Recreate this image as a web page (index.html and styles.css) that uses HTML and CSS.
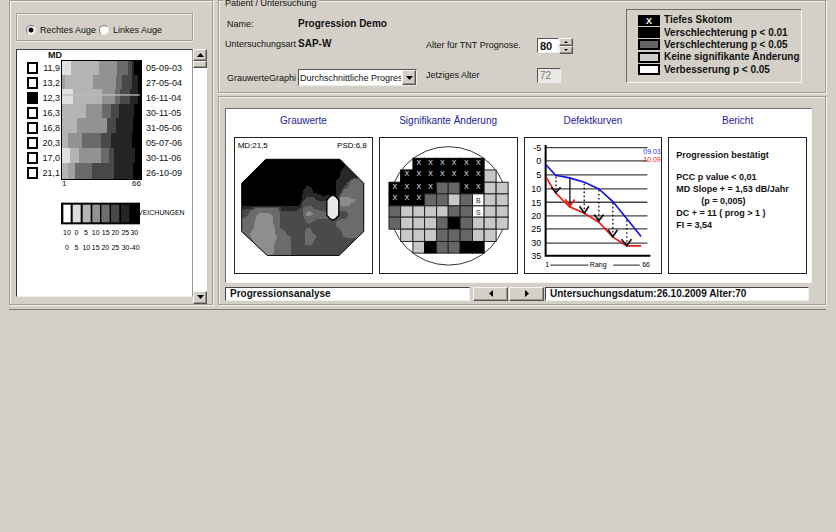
FILE: index.html
```html
<!DOCTYPE html>
<html lang="de">
<head>
<meta charset="utf-8">
<title>Progressionsanalyse</title>
<link rel="stylesheet" href="styles.css">
</head>
<body>
<main class="app">
  <section class="etched side">
    <div class="etched eyes">
      <label class="radio"><input type="radio" name="eye" checked>Rechtes Auge</label>
      <label class="radio"><input type="radio" name="eye">Linkes Auge</label>
    </div>
    <div class="browser">
      <div class="sunken list">
        <div class="md-head">MD</div>
        <div class="exams">
          <svg class="heat" id="heat" viewBox="182 178 243 360" aria-hidden="true"></svg>
          <input type="checkbox" id="e1"><label class="md" for="e1">11,9</label><span class="date">05-09-03</span>
          <input type="checkbox" id="e2"><label class="md" for="e2">13,2</label><span class="date">27-05-04</span>
          <input type="checkbox" id="e3" checked><label class="md" for="e3">12,3</label><span class="date">16-11-04</span>
          <input type="checkbox" id="e4"><label class="md" for="e4">16,3</label><span class="date">30-11-05</span>
          <input type="checkbox" id="e5"><label class="md" for="e5">16,8</label><span class="date">31-05-06</span>
          <input type="checkbox" id="e6"><label class="md" for="e6">20,3</label><span class="date">05-07-06</span>
          <input type="checkbox" id="e7"><label class="md" for="e7">17,0</label><span class="date">30-11-06</span>
          <input type="checkbox" id="e8"><label class="md" for="e8">21,1</label><span class="date">26-10-09</span>
        </div>
        <div class="ranks"><span>1</span><span>66</span></div>
        <svg class="scale" viewBox="182 65 372 153">
          <g class="t7"><text x="413" y="105">VEICHUNGEN</text></g>
          <rect x="182" y="67" width="237" height="65" fill="#000"/>
          <rect x="189" y="73" width="22" height="53" fill="#fff"/>
          <rect x="217" y="73" width="24" height="53" fill="#dcdcdc"/>
          <rect x="247" y="73" width="24" height="53" fill="#b4b4b4"/>
          <rect x="276" y="73" width="23" height="53" fill="#929292"/>
          <rect x="303" y="73" width="25" height="53" fill="#6e6e6e"/>
          <rect x="332" y="73" width="25" height="53" fill="#484848"/>
          <rect x="362" y="73" width="25" height="53" fill="#242424"/>
          <g class="t7 mid">
            <text x="200" y="165">10</text><text x="228" y="165">0</text><text x="257" y="165">5</text><text x="286" y="165">10</text><text x="316" y="165">15</text><text x="345" y="165">20</text><text x="375" y="165">25</text><text x="402" y="165">30</text>
            <text x="200" y="210">0</text><text x="228" y="210">5</text><text x="258" y="210">10</text><text x="286" y="210">15</text><text x="315" y="210">20</text><text x="345" y="210">25</text><text x="391" y="210">30-40</text>
          </g>
        </svg>
      </div>
      <div class="scroll">
        <button class="raised" aria-label="Nach oben"><svg viewBox="0 0 7 4"><path d="M3.500 0 7 4H0z"/></svg></button>
        <div class="raised thumb"></div>
        <button class="raised down" aria-label="Nach unten"><svg viewBox="0 0 7 4"><path d="M0 0h7L3.500 4z"/></svg></button>
      </div>
    </div>
  </section>

  <div class="main">
    <section class="etched patient">
      <h2 class="caption">Patient / Untersuchung</h2>
      <dl class="info">
        <dt>Name:</dt><dd>Progression Demo</dd>
        <dt class="wide">Untersuchungsart</dt><dd>SAP-W</dd>
        <dt class="low"><label for="graph">GrauwerteGraphi</label></dt>
        <dd class="low"><span class="combo"><select id="graph"><option>Durchschnittliche Progress</option></select><i class="raised"><svg viewBox="0 0 7 4"><path d="M0 0h7L3.500 4z"/></svg></i></span></dd>
      </dl>
      <div class="ages">
        <label for="prog">Alter für TNT Prognose.</label>
        <span class="spin"><input class="sunken strong" id="prog" type="text" value="80"><span class="steps"><button class="raised" aria-label="Mehr"><svg viewBox="0 0 4 2"><path d="M2 0 4 2H0z"/></svg></button><button class="raised" aria-label="Weniger"><svg viewBox="0 0 4 2"><path d="M0 0h4L2 2z"/></svg></button></span></span>
        <label for="age">Jetziges Alter</label>
        <input class="sunken dim" id="age" type="text" value="72" disabled>
      </div>
      <ul class="sunken key">
        <li><i class="deep">X</i>Tiefes Skotom</li>
        <li><i class="p01"></i>Verschlechterung p &lt; 0.01</li>
        <li><i class="p05"></i>Verschlechterung p &lt; 0.05</li>
        <li><i class="same"></i>Keine signifikante Änderung</li>
        <li><i class="better"></i>Verbesserung p &lt; 0.05</li>
      </ul>
    </section>

    <section class="etched results">
      <div class="sunken charts">
        <figure>
          <figcaption>Grauwerte</figcaption>
          <div class="card"><svg viewBox="45 114 411 405">
            <defs><clipPath id="oct"><path d="M138 178H360L432 250V395L358 467H142L65 395V250z"/></clipPath></defs>
            <g class="t8"><text x="53" y="145">MD:21,5</text><text x="441" y="145" text-anchor="end">PSD:6,8</text></g>
            <g clip-path="url(#oct)" shape-rendering="crispEdges">
              <path fill="#4a4a4a" d="M65 178h367v289H65z"/>
              <path fill="#282828" d="M65 300H240V270L262 254 300 275 350 270 350 178H432V235H400L385 245 372 260 360 285 350 300 320 304H296L280 292 262 290 250 304 242 325 230 332H182V322H100V326L65 330z"/>
              <path fill="#000" d="M65 178H376V198L364 210 358 235 350 240V286H320L308 290 303 284 280 278 276 265 262 257 250 272 245 300 238 318H65z"/>
              <path fill="#6b6b6b" d="M432 237H402L390 245 385 262 373 268 362 286 358 333H378L386 342 380 356 362 358 350 366V380L362 390 370 410 385 415H432z"/>
              <path fill="#8b8b8b" d="M362 291H390L394 298H406V306L394 310 390 318H362z"/>
              <path fill="#6b6b6b" d="M65 356 82 350 92 332 108 324H172L180 340V382L194 394 202 404 212 410V467H60z"/>
              <path fill="#8e8e8e" d="M110 348 118 340H150L158 350V368L166 384V400L172 412 164 430 160 467H130L104 430 92 412 90 400 102 386 104 366z"/>
              <path fill="#656565" d="M250 325 260 318H275L284 328 300 332H324V358H288L280 366 265 372 256 362 250 345z"/>
              <path fill="#8b8b8b" d="M257 336H265V332H272V339H278V345H270V348H257z"/>
              <path fill="#6b6b6b" d="M255 394 260 383H272L277 398 284 402 290 411 284 420 278 434 262 438 254 433z"/>
            </g>
            <path fill="none" stroke="#000" stroke-width="3" d="M138 178H360L432 250V395L358 467H142L65 395V250z"/>
            <path fill="#e8e8e8" stroke="#000" stroke-width="4" d="M321 301 330 290 339 286 348 290 357 301V346L348 356 339 361 330 356 321 346z"/>
          </svg></div>
        </figure>
        <figure>
          <figcaption>Signifikante Änderung</figcaption>
          <div class="card"><svg id="signif" viewBox="10 114 411 405">
            <circle cx="216" cy="318" r="178" fill="#fff" stroke="#333" stroke-width="3"/>
          </svg></div>
        </figure>
        <figure>
          <figcaption>Defektkurven</figcaption>
          <div class="card"><svg viewBox="16 114 411 405">
            <path stroke="#444" stroke-width="4" fill="none" d="M80 143H384M80 183H384M80 225H384M80 267H384M80 307H384M80 348H384M80 387H384M80 430H384"/>
            <path stroke="#000" stroke-width="6" fill="none" d="M78 135V468H393"/>
            <g class="t9" text-anchor="end"><text x="65" y="153">-5</text><text x="65" y="193">0</text><text x="65" y="235">5</text><text x="65" y="277">10</text><text x="65" y="317">15</text><text x="65" y="358">20</text><text x="65" y="397">25</text><text x="65" y="440">30</text><text x="65" y="478">35</text></g>
            <g class="t7" text-anchor="end"><text x="424" y="163" fill="#2a3cdc">09.03</text><text x="424" y="187" fill="#f02020">10.09</text></g>
            <path stroke="#1414dc" stroke-width="5" fill="none" d="M80 195 108 226 150 234 195 247 238 267 280 305 322 357 365 410"/>
            <path stroke="#f01818" stroke-width="5" fill="none" d="M80 233 108 279 150 321 195 340 238 367 280 412 322 438H365"/>
            <path stroke="#111" stroke-width="4" stroke-dasharray="5 7" fill="none" d="M109 230V275M194 251V336M238 270V362M280 309V408M322 361V434"/>
            <path stroke="#111" stroke-width="4" fill="none" d="M151 236V318"/>
            <path stroke="#111" stroke-width="5" fill="none" d="M95 262 109 278 123 262M180 319 194 340 208 319M224 344 238 363 252 344M266 390 280 411 294 390M306 418 322 438 336 418"/>
            <path stroke="#f01818" stroke-width="5" fill="none" d="M137 298 151 319 165 299"/>
            <path stroke="#222" stroke-width="3" d="M92 496H207M281 496H361"/>
            <g class="t7 mid"><text x="83" y="503">1</text><text x="236" y="503">Rang</text><text x="380" y="503">66</text></g>
          </svg></div>
        </figure>
        <figure>
          <figcaption>Bericht</figcaption>
          <div class="card report">
            <p class="verdict">Progression bestätigt</p>
            <p>PCC p value &lt; 0,01</p>
            <p>MD Slope + = 1,53 dB/Jahr</p>
            <p class="indent">(p = 0,005)</p>
            <p>DC + = 11 ( prog &gt; 1 )</p>
            <p>FI = 3,54</p>
          </div>
        </figure>
      </div>
      <div class="status">
        <output class="sunken mode">Progressionsanalyse</output>
        <button class="raised" aria-label="Zurück"><svg viewBox="0 0 4 7"><path d="M4 0v7L0 3.500z"/></svg></button>
        <button class="raised" aria-label="Weiter"><svg viewBox="0 0 4 7"><path d="M0 0v7L4 3.500z"/></svg></button>
        <output class="sunken exam">Untersuchungsdatum:26.10.2009 Alter:70</output>
      </div>
    </section>
  </div>
</main>
<script src="charts.js"></script>
</body>
</html>
```
FILE: styles.css
```css
* { box-sizing: border-box; }
body {
  margin: 0;
  background: #d4d0c8;
  color: #111;
  font: 9px/12px "Liberation Sans", Arial, sans-serif;
}
button, input, select { font: inherit; color: inherit; margin: 0; padding: 0; border-radius: 0; }
h2, dl, dd, ul, p, figure { margin: 0; padding: 0; }
i { font-style: normal; }
svg { display: block; }

.etched { border: 1px solid #a19e97; box-shadow: inset 1px 1px #f3f1ec, 1px 1px #f3f1ec; }
.sunken { border: 1px solid; border-color: #6e6c68 #f6f5f2 #f6f5f2 #6e6c68; }
.raised {
  background: #d4d0c8;
  border: 1px solid;
  border-color: #f6f5f2 #55534f #55534f #f6f5f2;
  box-shadow: inset -1px -1px #98958f;
  display: flex;
  align-items: center;
  justify-content: center;
}

.app {
  display: grid;
  grid-template-columns: 204px 1fr;
  gap: 5px;
  margin: 0 10px 0 9px;
  padding-bottom: 4px;
  border-bottom: 1px solid #7e7c77;
  box-shadow: 0 1px #b3b0a9;
}

/* examination browser */
.side { padding: 12px 5px 0 6px; display: flex; flex-direction: column; }
.eyes { display: flex; height: 28px; width: 177px; align-items: center; gap: 3px; padding: 6px 0 0 9px; }
.radio { display: flex; align-items: center; gap: 4px; white-space: nowrap; }
.radio input {
  appearance: none;
  width: 10px;
  height: 10px;
  border-radius: 50%;
  border: 1px solid;
  border-color: #777 #f0eeea #f0eeea #777;
  background: #fff;
}
.radio input:checked { background: radial-gradient(#000 2px, #fff 3px); }
.browser { display: grid; grid-template-columns: 1fr 14px; flex: 1; margin-top: 8px; }
.list { background: #fff; border-color: #444 #999 #eee #333; padding: 0 0 0 10px; margin-bottom: 7px; }
.md-head { font-weight: bold; line-height: 10px; width: 35px; text-align: right; }
.exams {
  display: grid;
  grid-template-columns: 11px 23px 81px 1fr;
  grid-template-rows: repeat(8, 1fr);
  height: 120px;
  align-items: center;
}
.exams input {
  appearance: none;
  grid-column: 1;
  width: 11px;
  height: 12px;
  border: 2px solid #000;
  background: #fff;
}
.exams input:checked { background: #000; }
.md { grid-column: 2; text-align: right; padding-right: 1px; }
.heat { grid-column: 3; grid-row: 1 / 9; width: 81px; height: 120px; }
.date { grid-column: 4; padding-left: 4px; }
.ranks { display: flex; justify-content: space-between; width: 79px; margin-left: 35px; font-size: 8px; line-height: 8px; }
.scale { width: 124px; height: 51px; margin: 14px 0 0 34px; }
.scroll { background: #fff; display: flex; flex-direction: column; }
.scroll button { height: 12px; }
.scroll svg { width: 7px; height: 4px; }
.scroll .thumb { height: 7px; }
.scroll .down { margin-top: auto; height: 13px; }

.t7 { font-size: 21px; }
.t8 { font-size: 24px; }
.t9 { font-size: 27px; }
.mid { text-anchor: middle; }

/* patient data */
.main { display: flex; flex-direction: column; gap: 3px; min-width: 0; }
.patient {
  display: grid;
  grid-template-columns: 201px 200px 176px;
  height: 93px;
  padding-left: 6px;
  position: relative;
}
.caption {
  position: absolute;
  top: -4px;
  left: 4px;
  padding: 0 2px;
  background: #d4d0c8;
  font-size: 9px;
  font-weight: normal;
  line-height: 12px;
}
.info { display: grid; grid-template-columns: 73px 1fr; grid-template-rows: 20px 20px 32px; padding-top: 13px; align-items: center; }
dt { padding-left: 2px; white-space: nowrap; }
.info .wide { padding-left: 0; }
dd, .strong { font-weight: bold; font-size: 10px; }
.info .low { align-self: end; }
dt.low { padding-bottom: 2px; }
.combo { display: block; position: relative; width: 119px; }
.combo select {
  appearance: none;
  display: block;
  width: 100%;
  height: 17px;
  padding: 0 15px 0 1px;
  border: 1px solid;
  border-color: #555 #eee #eee #555;
  border-radius: 0;
  background: #fff;
  font-weight: normal;
  font-size: 9px;
  overflow: hidden;
}
.combo i { position: absolute; right: 1px; top: 1px; width: 14px; height: 15px; pointer-events: none; }
.combo svg { width: 7px; height: 4px; }
.ages {
  display: grid;
  grid-template-columns: 111px 1fr;
  grid-template-rows: 17px 15px;
  row-gap: 14px;
  padding-top: 36px;
  align-items: center;
}
.ages label { padding-bottom: 2px; }
.ages .sunken { width: 24px; height: 15px; padding: 0 0 0 2px; background: #fff; border-color: #555 #eee #eee #555; }
.ages .dim { color: #777; background: #eae8e4; font-size: 10px; }
.spin { display: flex; align-items: center; }
.spin .strong { width: 22px; font-size: 11px; }
.steps { display: grid; grid-template-rows: 8px 8px; width: 14px; }
.steps svg { width: 4px; height: 2px; }
.key {
  list-style: none;
  align-self: start;
  margin-top: 8px;
  height: 74px;
  padding: 4px 0 6px 11px;
  display: grid;
  grid-template-rows: repeat(5, 1fr);
  align-items: center;
  font-weight: bold;
  font-size: 10px;
  white-space: nowrap;
}
.key li { display: flex; align-items: center; gap: 4px; }
.key i { width: 22px; height: 11px; border: 2px solid #000; text-align: center; font-size: 9px; line-height: 8px; color: #fff; }
.deep, .p01 { background: #000; }
.p05 { background: #666; }
.same { background: #ccc; }
.better { background: #fff; }

/* results */
.results { padding: 11px 13px 3px 6px; }
.charts {
  display: grid;
  grid-template-columns: repeat(4, 1fr);
  gap: 6px;
  padding: 4px 4px 8px 8px;
  background: #fff;
}
figure { display: flex; flex-direction: column; min-width: 0; }
figcaption { text-align: center; font-size: 10px; line-height: 16px; margin-bottom: 8px; color: #1c1ca0; }
.card { border: 1px solid #222; flex: 1; }
.card svg { width: 100%; height: auto; }
.report { font-weight: bold; padding: 11px 0 0 7px; white-space: nowrap; }
.report p { line-height: 12px; }
.report .verdict { margin-bottom: 10px; }
.report .indent { padding-left: 25px; }
.status { display: grid; grid-template-columns: 247px 35px 35px 1fr; column-gap: 1px; margin: 4px 3px 0 0; height: 14px; font-weight: bold; font-size: 10px; }
.status output { background: #fff; padding-left: 4px; line-height: 12px; border-color: #444 #eee #eee #444; white-space: nowrap; overflow: hidden; }
.status .mode { margin-right: 2px; }
.status svg { width: 4px; height: 7px; }
```
FILE: charts.js
```js
const NS = 'http://www.w3.org/2000/svg';
function add(parent, name, attrs, text) {
  const el = document.createElementNS(NS, name);
  for (const k in attrs) el.setAttribute(k, attrs[k]);
  if (text) el.textContent = text;
  parent.appendChild(el);
}

// Sorted defects: one band per examination, each [right edge, grey level].
const bands = [
  [[213, '#e0e0e0'], [296, '#b4b4b4'], [349, '#929292'], [382, '#6a6a6a'], [395, '#484848'], [402, '#242424']],
  [[194, '#a0a0a0'], [278, '#b4b4b4'], [347, '#929292'], [365, '#6a6a6a'], [395, '#484848'], [412, '#242424']],
  [[217, '#e0e0e0'], [305, '#b4b4b4'], [343, '#929292'], [360, '#6a6a6a'], [390, '#484848'], [412, '#242424']],
  [[258, '#b4b4b4'], [305, '#929292'], [333, '#6a6a6a'], [355, '#484848'], [400, '#242424']],
  [[230, '#b4b4b4'], [320, '#929292'], [348, '#484848'], [398, '#242424']],
  [[202, '#b4b4b4'], [244, '#929292'], [303, '#6a6a6a'], [332, '#484848'], [395, '#242424']],
  [[210, '#e0e0e0'], [236, '#b4b4b4'], [303, '#929292'], [325, '#6a6a6a'], [341, '#484848'], [405, '#242424']],
  [[202, '#b4b4b4'], [224, '#a0a0a0'], [274, '#6a6a6a'], [341, '#484848'], [398, '#242424']]
];
const edges = [180, 222, 265, 309, 353, 398, 442, 486, 535];
const heat = document.getElementById('heat');
add(heat, 'rect', { x: 182, y: 178, width: 243, height: 360, fill: '#000' });
bands.forEach((band, r) => {
  let x = 186;
  band.forEach(([end, fill]) => {
    add(heat, 'rect', { x, y: edges[r], width: end - x, height: edges[r + 1] - edges[r], fill, 'shape-rendering': 'crispEdges' });
    x = end;
  });
});
add(heat, 'rect', { x: 186, y: 281, width: 232, height: 4, fill: '#bbb' });

// Significance map: X deep, k p<0.01, d p<0.05, l unchanged, others white with their letter.
const map = ['  XXXXXX  ', ' XXXXXXXl ', 'XXXXddXXll', 'XXXddldBll', 'dllllddSll', 'dllldkdlll', ' llldddll ', '  lkddkk  '];
const xs = [37, 72, 109, 144, 180, 215, 251, 288, 323, 359, 395];
const ys = [175, 210, 247, 282, 318, 352, 388, 425, 460];
const fills = { X: '#000', k: '#000', d: '#666', l: '#c8c8c8' };
const signif = document.getElementById('signif');
map.forEach((row, r) => [...row].forEach((c, i) => {
  if (c === ' ') return;
  const black = c === 'X' || c === 'k';
  add(signif, 'rect', { x: xs[i], y: ys[r], width: xs[i + 1] - xs[i], height: ys[r + 1] - ys[r], fill: fills[c] || '#fff', stroke: black ? '#000' : '#222', 'stroke-width': 3 });
  if ('XBS'.includes(c)) {
    add(signif, 'text', { x: (xs[i] + xs[i + 1]) / 2, y: ys[r] + (c === 'X' ? 19 : 26), class: 't7 mid', fill: c === 'X' ? '#eee' : '#222' }, c);
  }
}));
```
